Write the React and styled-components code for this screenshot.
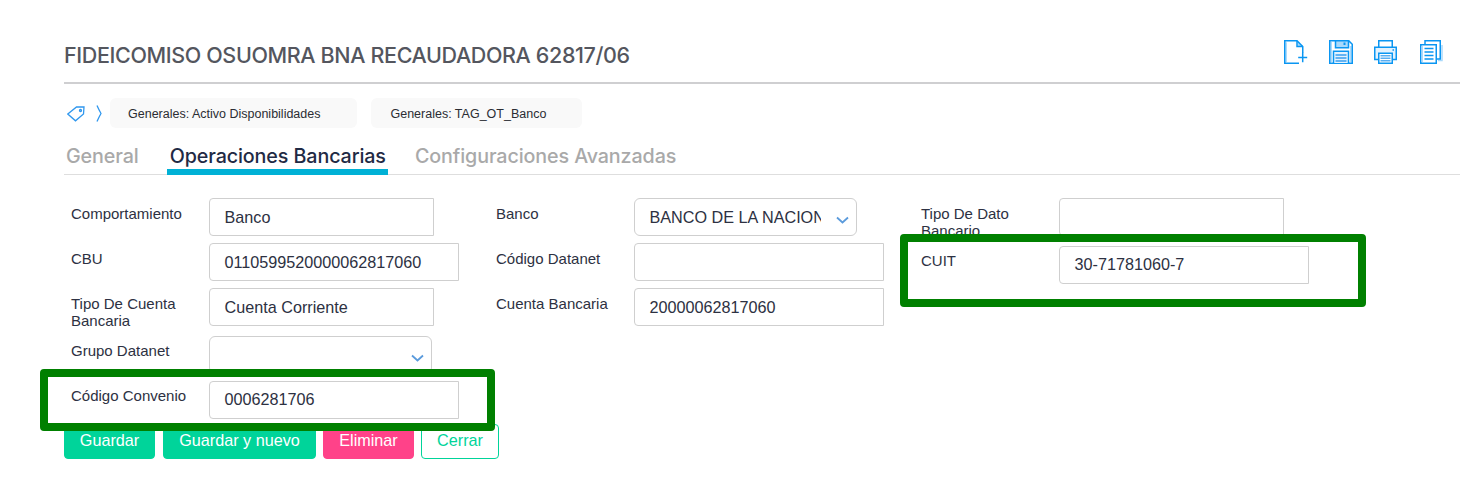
import React from "react";
import styled, { createGlobalStyle } from "styled-components";

const Global = createGlobalStyle`
  html, body { margin: 0; padding: 0; background: #fff; }
  body { font-family: "Liberation Sans", Arial, sans-serif; color: #2d3142; }
`;

const Page = styled.div`
  position: relative;
  width: 1460px;
  height: 503px;
  padding: 33px 0 0 64px;
  box-sizing: border-box;
  overflow: hidden;
`;

const Header = styled.header`
  display: flex;
  align-items: flex-start;
  justify-content: space-between;
  height: 51px;
  box-sizing: border-box;
  border-bottom: 2px solid #cfcfd1;
  padding: 7px 16px 0 0;
`;

const Title = styled.h1`
  margin: 2px 0 0;
  font-family: Inter, "Noto Sans", sans-serif;
  font-size: 21.5px;
  line-height: 26px;
  font-weight: 500;
  letter-spacing: -0.37px;
  color: #54565e;
`;

const Tools = styled.div`
  display: flex;
`;

const ToolIcon = styled.svg`
  width: 24px;
  height: 24px;
  display: block;
  overflow: visible;
  fill: none;
  stroke: #0a96f2;
  stroke-width: 1.5;
  margin-right: ${(p) => p.$mr || 0}px;
`;

const Crumbs = styled.nav`
  display: flex;
  align-items: center;
  height: 30px;
  margin-top: 14px;
`;

const CrumbIcon = styled.svg`
  display: block;
  fill: none;
  stroke: #2f97ee;
  stroke-width: 1.3;
  margin-right: ${(p) => p.$mr}px;
  margin-left: ${(p) => p.$ml || 0}px;
`;

const Chip = styled.span`
  display: flex;
  align-items: center;
  height: 30px;
  box-sizing: border-box;
  padding: 2px ${(p) => p.$pr}px 0 ${(p) => p.$pl}px;
  margin-right: 14px;
  background: #f9f9f9;
  border-radius: 6px;
  font-size: 12.5px;
  color: #2b2d33;
`;

const Tabs = styled.div`
  display: flex;
  height: 47px;
  border-bottom: 1px solid #dedede;
  box-sizing: border-box;
`;

const Tab = styled.div`
  box-sizing: border-box;
  height: 47px;
  padding: 16px 2px 0 3px;
  margin-right: ${(p) => p.$mr}px;
  font-family: Inter, "Noto Sans", sans-serif;
  font-size: 19.7px;
  font-weight: 500;
  letter-spacing: -0.1px;
  line-height: 24px;
  color: ${(p) => (p.$active ? "#1f2a44" : "#a9a9a9")};
  border-bottom: 6px solid ${(p) => (p.$active ? "#00b1d6" : "transparent")};
  &:first-child {
    padding-left: 2px;
  }
`;

const Form = styled.div`
  display: flex;
  margin-top: 23px;
  height: 226px;
`;

const Column = styled.div`
  width: 425px;
  flex: none;
`;

const Field = styled.div`
  display: flex;
  height: ${(p) => p.$h || 45}px;
`;

const Label = styled.label`
  width: 145px;
  flex: none;
  box-sizing: border-box;
  padding: ${(p) => p.$top || 7}px 7px 0;
  font-size: 15px;
  line-height: 17px;
  color: #2d3142;
`;

const Input = styled.div`
  box-sizing: border-box;
  width: ${(p) => p.$w}px;
  height: 38px;
  padding: 0 15px 0 14.5px;
  border: 1px solid #cfcfcf;
  border-radius: 4px 0 0 4px;
  background: #fff;
  font-size: 16.2px;
  line-height: ${(p) => p.$lh || 37}px;
  color: #2d3142;
  white-space: nowrap;
  overflow: hidden;
`;

const Select = styled(Input)`
  position: relative;
  border-radius: 6px;
  padding-right: 35px;
`;

const SelectText = styled.span`
  display: block;
  width: 171px;
  overflow: hidden;
`;

const Chevron = styled.svg`
  position: absolute;
  right: 7px;
  top: 17px;
  width: 13px;
  height: 8px;
  fill: none;
  stroke: #5b9bdc;
  stroke-width: 1.8;
`;

const Actions = styled.div`
  display: flex;
`;

const Button = styled.button`
  height: 35px;
  width: ${(p) => p.$w}px;
  margin-right: ${(p) => p.$mr}px;
  padding: 0 0 2px;
  box-sizing: border-box;
  border: 1px solid ${(p) => p.$c};
  border-radius: 4px;
  background: ${(p) => (p.$outline ? "#fff" : p.$c)};
  color: ${(p) => (p.$outline ? p.$c : "#fff")};
  font-family: "Liberation Sans", Arial, sans-serif;
  font-size: 16.2px;
`;

const Highlight = styled.div`
  position: absolute;
  left: ${(p) => p.$x}px;
  top: ${(p) => p.$y}px;
  width: ${(p) => p.$w}px;
  height: ${(p) => p.$h}px;
  box-sizing: border-box;
  border: 8px solid #008000;
  border-radius: 4px;
  pointer-events: none;
`;

const Caret = () => (
  <Chevron viewBox="0 0 13 8">
    <path d="M1 1.5 L6.5 6.5 L12 1.5" />
  </Chevron>
);

const LIGHT = "#a9d9fb";

export default function App() {
  return (
    <Page>
      <Global />
      <Header>
        <Title>FIDEICOMISO OSUOMRA BNA RECAUDADORA 62817/06</Title>
        <Tools>
          <ToolIcon $mr={21} viewBox="0 0 24 24">
            <path d="M2.200 2.200V22" stroke={LIGHT} />
            <path d="M13.500 1.500v5h4.500z" fill={LIGHT} stroke="none" />
            <path d="M15 23.250H.75V.75H13l5.750 5.750V13" />
            <path d="M13 .75v5.750h5.750" />
            <path d="M14.200 17.500h9M18.700 12.800v9.400" />
          </ToolIcon>
          <ToolIcon $mr={21} viewBox="0 0 24 24">
            <path d="M2.200 2v20M21.800 6v16" stroke={LIGHT} />
            <path d="M6.500 1h13v6.750h-13z" fill={LIGHT} stroke="none" />
            <path d="M.75.75h19l3.500 3.500v19H.75z" />
            <path d="M6.500.75v7h13V.75" />
            <path d="M14.500 2.500h2v2.500h-2z" fill="#0a96f2" stroke="none" />
            <path d="M4.500 23V11.250h15V23" fill="#e3f2fe" />
            <path d="M6.500 15h11M6.500 18h11M6.500 21h11" stroke="#3a9ff0" />
          </ToolIcon>
          <ToolIcon $mr={22} viewBox="0 0 24 24">
            <path d="M4.750 7.250V.75h13.500v6.500" />
            <path d="M4.750 19.500H.75V7.250h21.500V19.500H18.250" fill="#e3f2fe" />
            <path d="M4.750 13.250h13.500v10H4.750z" fill="#fff" />
            <path d="M6.500 15.800h10M6.500 18.300h10M6.500 20.800h10" stroke="#58aef2" />
            <path d="M18.500 10h1.500" />
          </ToolIcon>
          <ToolIcon viewBox="0 0 24 24">
            <path d="M22 5v15.500H18" stroke={LIGHT} />
            <path d="M5 4V.75h15.250V19H16.500" />
            <path d="M.75 4.750h15.500v18.500H.75z" fill="#fff" />
            <path d="M2.200 6v16" stroke={LIGHT} />
            <path d="M4.500 8.500h9M4.500 12h9M4.500 15.500h9M4.500 19h9" />
          </ToolIcon>
        </Tools>
      </Header>
      <Crumbs>
        <CrumbIcon $ml={3} $mr={11} width="18" height="17" viewBox="0 0 18 17">
          <path d="M.8 9 L9.500 2 H17 L16.500 9 L8.500 15.800 Z" />
          <circle cx="13.500" cy="5.500" r="1" />
        </CrumbIcon>
        <CrumbIcon $mr={8} width="6" height="17" viewBox="0 0 6 17">
          <path d="M1 .5 Q3 5 5 8.500 Q3 12 1 16.500" />
        </CrumbIcon>
        <Chip $pl={18} $pr={37}>Generales: Activo Disponibilidades</Chip>
        <Chip $pl={19} $pr={36}>Generales: TAG_OT_Banco</Chip>
      </Crumbs>
      <Tabs>
        <Tab $mr={26}>General</Tab>
        <Tab $mr={24} $active>Operaciones Bancarias</Tab>
        <Tab $mr={0}>Configuraciones Avanzadas</Tab>
      </Tabs>
      <Form>
        <Column>
          <Field>
            <Label>Comportamiento</Label>
            <Input $w={225}>Banco</Input>
          </Field>
          <Field>
            <Label>CBU</Label>
            <Input $w={250}>0110599520000062817060</Input>
          </Field>
          <Field $h={48}>
            <Label>Tipo De Cuenta Bancaria</Label>
            <Input $w={225}>Cuenta Corriente</Input>
          </Field>
          <Field>
            <Label $top={6}>Grupo Datanet</Label>
            <Select $w={223}><Caret /></Select>
          </Field>
          <Field>
            <Label $top={6}>Código Convenio</Label>
            <Input $w={250} $lh={35}>0006281706</Input>
          </Field>
        </Column>
        <Column>
          <Field>
            <Label>Banco</Label>
            <Select $w={223}>
              <SelectText>BANCO DE LA NACION</SelectText>
              <Caret />
            </Select>
          </Field>
          <Field>
            <Label>Código Datanet</Label>
            <Input $w={250} />
          </Field>
          <Field>
            <Label>Cuenta Bancaria</Label>
            <Input $w={250}>20000062817060</Input>
          </Field>
        </Column>
        <Column>
          <Field $h={48}>
            <Label>Tipo De Dato Bancario</Label>
            <Input $w={225} />
          </Field>
          <Field>
            <Label $top={6}>CUIT</Label>
            <Input $w={250} $lh={35}>30-71781060-7</Input>
          </Field>
        </Column>
      </Form>
      <Actions>
        <Button $w={91} $mr={8} $c="#00d49a">Guardar</Button>
        <Button $w={153} $mr={7} $c="#00d49a">Guardar y nuevo</Button>
        <Button $w={91} $mr={7} $c="#ff4289">Eliminar</Button>
        <Button $w={78} $mr={0} $c="#00d49a" $outline>Cerrar</Button>
      </Actions>
      <Highlight $x={40} $y={369} $w={455} $h={62} />
      <Highlight $x={900} $y={234} $w={466} $h={73} />
    </Page>
  );
}
